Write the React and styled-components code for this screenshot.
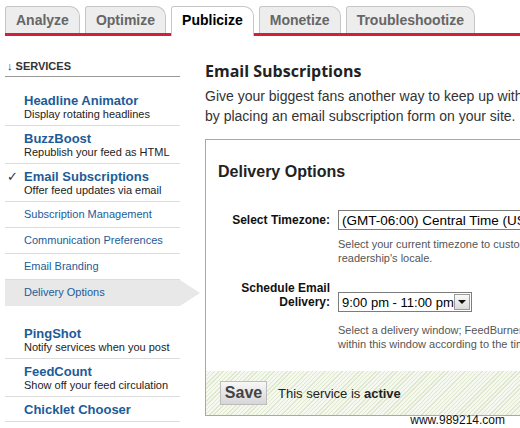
import React from "react";
import styled, { createGlobalStyle } from "styled-components";

const GlobalStyle = createGlobalStyle`
  html, body {
    margin: 0;
    padding: 0;
    background: #fff;
  }
  body {
    font-family: "Liberation Sans", Arial, sans-serif;
    overflow: hidden;
  }
`;

const Page = styled.div`
  position: relative;
  width: 520px;
  height: 428px;
  overflow: hidden;
`;

const TabBar = styled.div`
  display: flex;
  align-items: flex-end;
  gap: 5px;
  height: 27px;
  padding-top: 6px;
  margin-left: 5px;
  border-bottom: 3px solid #d0203b;
`;

const Tab = styled.div`
  position: relative;
  box-sizing: border-box;
  display: flex;
  align-items: center;
  height: ${(p) => (p.$active ? "30px" : "27px")};
  margin-bottom: ${(p) => (p.$active ? "-3px" : "0")};
  padding: ${(p) => (p.$active ? "0 10px 3px" : "0 10px")};
  background: ${(p) => (p.$active ? "#fff" : "#ededed")};
  border: 1px solid #c6c6c6;
  border-bottom: none;
  border-radius: 3px 10px 0 0;
  font-size: 14px;
  font-weight: bold;
  color: ${(p) => (p.$active ? "#000" : "#666")};
`;

const Body = styled.div`
  display: flex;
  align-items: flex-start;
`;

const Sidebar = styled.nav`
  flex-shrink: 0;
  width: 175px;
  margin: 23px 0 0 5px;
`;

const SectionHeader = styled.div`
  padding: 0 0 3px 2px;
  border-bottom: 1px solid #999;
  font-size: 11px;
  line-height: 14px;
  font-weight: bold;
  color: #333;
`;

const ServiceList = styled.div`
  margin-top: 11px;
`;

const Service = styled.div`
  position: relative;
  padding: 5px 0 4px 19px;
  border-bottom: 1px solid #dcdcdc;
`;

const Check = styled.span`
  position: absolute;
  left: 2px;
  top: 5px;
  font-size: 13px;
  line-height: 15px;
  color: #333;
`;

const ServiceTitle = styled.div`
  font-size: 13px;
  line-height: 15px;
  font-weight: bold;
  color: #1d5b98;
`;

const ServiceDesc = styled.div`
  font-size: 11px;
  line-height: 13px;
  color: #222;
`;

const SubList = styled.div`
  margin-bottom: 15px;
`;

const SubItem = styled.div`
  position: relative;
  height: 25px;
  padding-left: 19px;
  line-height: 25px;
  font-size: 11px;
  color: #1d5b98;
  background: ${(p) => (p.$active ? "#e8e8e8" : "transparent")};
  border-bottom: 1px solid ${(p) => (p.$active ? "#e8e8e8" : "#dcdcdc")};

  ${(p) =>
    p.$active &&
    `
    &::after {
      content: "";
      position: absolute;
      top: 0;
      right: -20px;
      border-left: 20px solid #e8e8e8;
      border-top: 13px solid transparent;
      border-bottom: 13px solid transparent;
    }
  `}
`;

const Main = styled.main`
  flex-shrink: 0;
  width: 500px;
  margin: 24px 0 0 25px;
`;

const PageTitle = styled.h1`
  margin: 0;
  font-family: "Open Sans", "Liberation Sans", sans-serif;
  font-size: 16px;
  line-height: 22px;
  font-weight: 700;
  color: #222;
`;

const Intro = styled.p`
  margin: 4px 0 0;
  font-size: 14px;
  line-height: 20px;
  color: #333;
  white-space: nowrap;
`;

const Panel = styled.section`
  margin-top: 13px;
  border: 1px solid #a8a8a8;
`;

const PanelBody = styled.div`
  padding: 22px 0 20px 12px;
`;

const PanelTitle = styled.h2`
  margin: 0;
  font-size: 16px;
  line-height: 20px;
  font-weight: bold;
  color: #222;
`;

const Field = styled.div`
  display: grid;
  grid-template-columns: 112px 1fr;
  column-gap: 8px;
  align-items: ${(p) => p.$align || "center"};
  margin-top: ${(p) => p.$top}px;
`;

const Label = styled.label`
  font-size: 12px;
  line-height: 14px;
  font-weight: bold;
  color: #111;
  text-align: right;
`;

const SelectBox = styled.div`
  box-sizing: border-box;
  display: flex;
  align-items: center;
  justify-content: space-between;
  width: ${(p) => p.$width}px;
  height: 20px;
  margin-bottom: ${(p) => (p.$drop ? "-3px" : "0")};
  padding-left: 3px;
  border: 1px solid #7c7c7c;
  background: #fff;
  font-size: ${(p) => (p.$drop ? "13px" : "13.5px")};
  color: #000;
  white-space: nowrap;
  overflow: hidden;
`;

const DropButton = styled.span`
  box-sizing: border-box;
  flex-shrink: 0;
  display: flex;
  align-items: center;
  justify-content: center;
  width: 16px;
  height: 16px;
  margin-right: 1px;
  border: 1px solid #9a9a9a;
  background: linear-gradient(#fafafa, #dadada);

  &::before {
    content: "";
    border-left: 4px solid transparent;
    border-right: 4px solid transparent;
    border-top: 4px solid #111;
  }
`;

const Help = styled.div`
  grid-column: 2;
  margin-top: ${(p) => p.$top}px;
  font-size: 11px;
  line-height: 14px;
  color: #555;
  white-space: nowrap;
`;

const Footer = styled.div`
  display: flex;
  align-items: center;
  gap: 11px;
  padding: 10px 14px;
  background-color: #f5f8ee;
  background-image: repeating-linear-gradient(
    135deg,
    #dfe7cf 0 1px,
    transparent 1px 3px
  );
`;

const SaveButton = styled.button`
  box-sizing: border-box;
  width: 47px;
  height: 24px;
  padding: 0;
  border: 1px solid #bdbdbd;
  background: linear-gradient(#f7f7f7, #d6d6d6);
  font-family: "Liberation Sans", Arial, sans-serif;
  font-size: 16px;
  font-weight: bold;
  color: #444;
`;

const Status = styled.span`
  font-size: 13px;
  color: #222;

  b {
    font-weight: bold;
  }
`;

const Watermark = styled.div`
  position: absolute;
  right: 15px;
  bottom: 1px;
  font-size: 12px;
  line-height: 14px;
  color: #111;
  text-shadow: 0 0 2px #fff, 0 0 2px #fff;
`;

const tabs = ["Analyze", "Optimize", "Publicize", "Monetize", "Troubleshootize"];

const subItems = [
  "Subscription Management",
  "Communication Preferences",
  "Email Branding",
  "Delivery Options",
];

export default function App() {
  return (
    <Page>
      <GlobalStyle />
      <TabBar>
        {tabs.map((t) => (
          <Tab key={t} $active={t === "Publicize"}>
            {t}
          </Tab>
        ))}
      </TabBar>

      <Body>
        <Sidebar>
          <SectionHeader>↓ SERVICES</SectionHeader>
          <ServiceList>
            <Service>
              <ServiceTitle>Headline Animator</ServiceTitle>
              <ServiceDesc>Display rotating headlines</ServiceDesc>
            </Service>
            <Service>
              <ServiceTitle>BuzzBoost</ServiceTitle>
              <ServiceDesc>Republish your feed as HTML</ServiceDesc>
            </Service>
            <Service>
              <Check>✓</Check>
              <ServiceTitle>Email Subscriptions</ServiceTitle>
              <ServiceDesc>Offer feed updates via email</ServiceDesc>
            </Service>
            <SubList>
              {subItems.map((s) => (
                <SubItem key={s} $active={s === "Delivery Options"}>
                  {s}
                </SubItem>
              ))}
            </SubList>
            <Service>
              <ServiceTitle>PingShot</ServiceTitle>
              <ServiceDesc>Notify services when you post</ServiceDesc>
            </Service>
            <Service>
              <ServiceTitle>FeedCount</ServiceTitle>
              <ServiceDesc>Show off your feed circulation</ServiceDesc>
            </Service>
            <Service>
              <ServiceTitle>Chicklet Chooser</ServiceTitle>
            </Service>
          </ServiceList>
        </Sidebar>

        <Main>
          <PageTitle>Email Subscriptions</PageTitle>
          <Intro>
            Give your biggest fans another way to keep up with your feed
            <br />
            by placing an email subscription form on your site.
          </Intro>

          <Panel>
            <PanelBody>
              <PanelTitle>Delivery Options</PanelTitle>

              <Field $top={28}>
                <Label>Select Timezone:</Label>
                <SelectBox $width={300}>
                  (GMT-06:00) Central Time (US &amp; Canada)
                </SelectBox>
                <Help $top={7}>
                  Select your current timezone to customize delivery for your
                  <br />
                  readership's locale.
                </Help>
              </Field>

              <Field $top={16} $align="end">
                <Label>
                  Schedule Email
                  <br />
                  Delivery:
                </Label>
                <SelectBox $width={134} $drop>
                  9:00 pm - 11:00 pm
                  <DropButton />
                </SelectBox>
                <Help $top={14}>
                  Select a delivery window; FeedBurner will send your email
                  <br />
                  within this window according to the timezone above.
                </Help>
              </Field>
            </PanelBody>

            <Footer>
              <SaveButton>Save</SaveButton>
              <Status>
                This service is <b>active</b>
              </Status>
            </Footer>
          </Panel>
        </Main>
      </Body>

      <Watermark>www.989214.com</Watermark>
    </Page>
  );
}
